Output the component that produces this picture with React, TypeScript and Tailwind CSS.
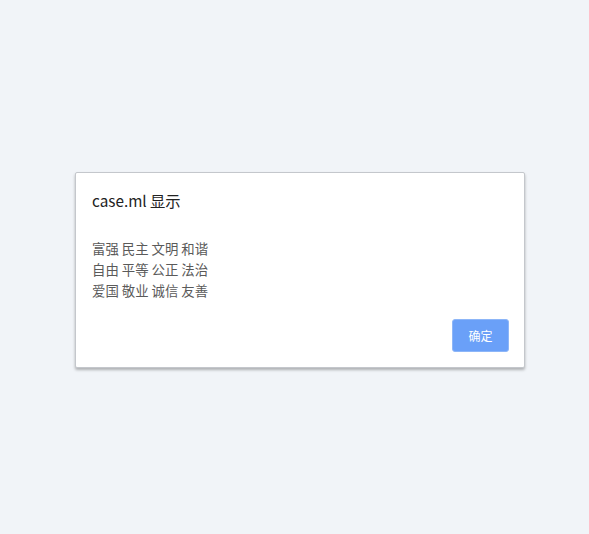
export default function App() {
  const lines = ["富强 民主 文明 和谐", "自由 平等 公正 法治", "爱国 敬业 诚信 友善"];
  return (
    <div
      className="w-[589px] h-[534px] bg-[#f1f4f8] pt-[172px] pl-[75px]"
      style={{ fontFamily: '"Noto Sans CJK SC", "Liberation Sans", sans-serif' }}
    >
      <div className="w-[450px] h-[196px] bg-white border border-[#c4c7cc] rounded-[2px] shadow-[0_2px_3px_rgba(0,0,0,0.28)] flex flex-col pl-[16px] pr-[15px]">
        <div className="mt-[16px] text-[15.3px] leading-[22px] text-[#222]">case.ml 显示</div>
        <div className="mt-[27px] text-[13.4px] leading-[21px] text-[#5a5a5a]">
          {lines.map((l) => (
            <div key={l}>{l}</div>
          ))}
        </div>
        <div className="flex justify-end mt-[18px]">
          <button className="w-[57px] h-[33px] bg-[#6aa0f8] border border-[#8db6f8] rounded-[3px] text-white text-[12px]">
            确定
          </button>
        </div>
      </div>
    </div>
  );
}
